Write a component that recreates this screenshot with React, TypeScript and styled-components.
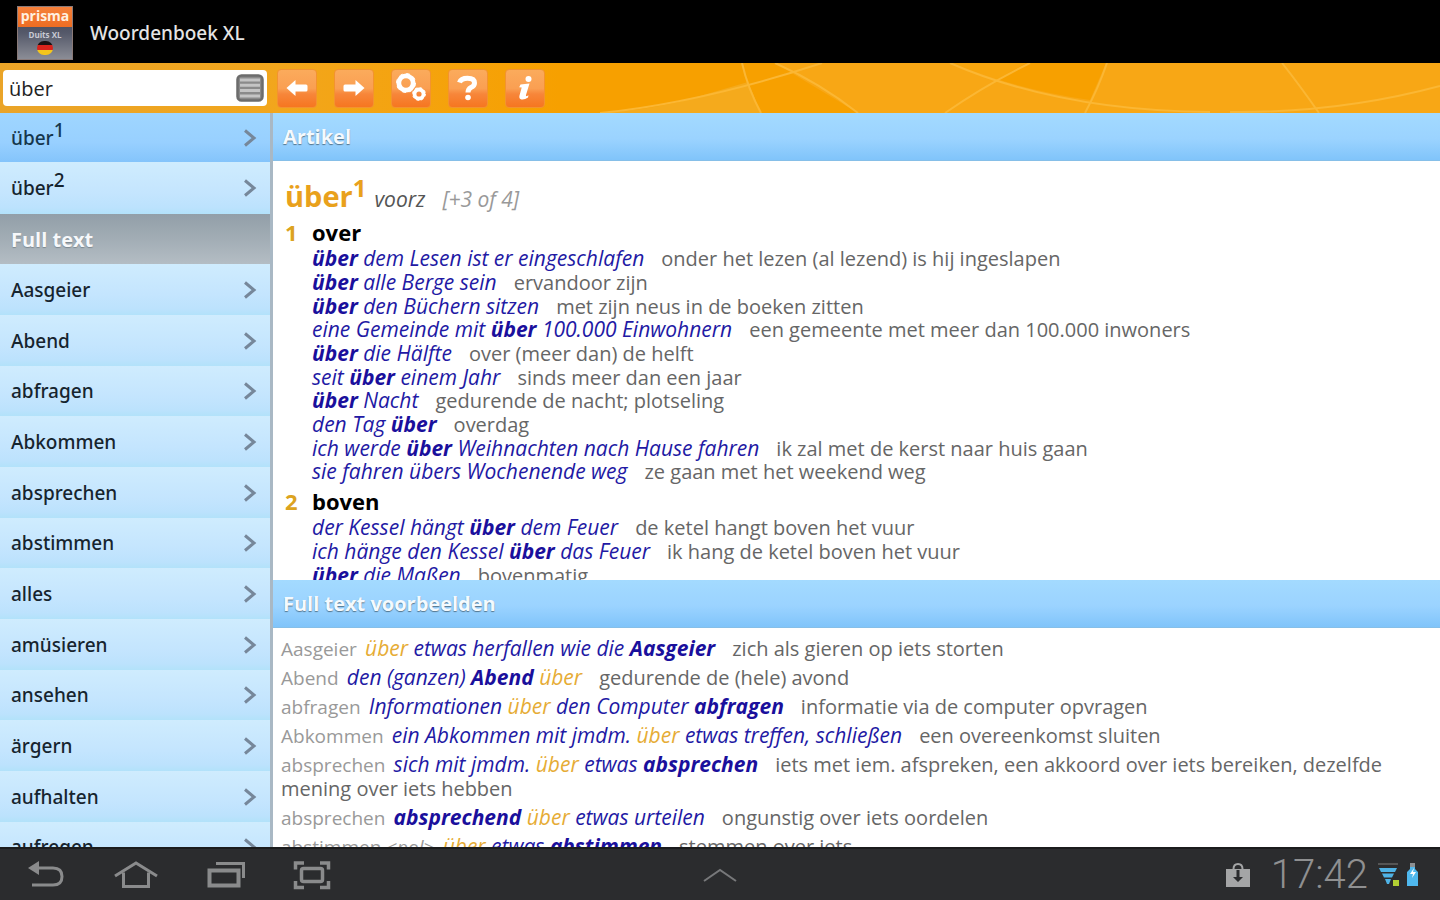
import React from "react";
import styled, { createGlobalStyle } from "styled-components";

const GlobalStyle = createGlobalStyle`
  *, *::before, *::after { box-sizing: border-box; }
  html, body, #root { height: 100%; margin: 0; }
  body {
    background: #000;
    color: #111;
    font-family: "Open Sans", "Noto Sans", sans-serif;
    overflow: hidden;
  }
  button, input { font: inherit; }
`;

const Screen = styled.div`
  display: flex;
  flex-direction: column;
  height: 100vh;
`;

/* ---------- title bar ---------- */

const TitleBar = styled.header`
  display: flex;
  align-items: center;
  flex: none;
  gap: 17px;
  height: 63px;
  padding-left: 17px;
  padding-top: 2px;
  background: #000;
`;

const AppLogo = styled.div`
  display: flex;
  flex-direction: column;
  align-items: center;
  width: 56px;
  height: 54px;
  background: linear-gradient(#3b3f4c, #55596a 50%, #8b8d96);
  border: 1px solid #8a7a78;
`;

const LogoBrand = styled.span`
  width: 100%;
  height: 20px;
  background: linear-gradient(#f5803a, #ee6d22);
  color: #fff0e0;
  font-size: 14px;
  font-weight: 700;
  line-height: 18px;
  text-align: center;
`;

const LogoEdition = styled.span`
  height: 14px;
  color: #c8cad4;
  font-size: 8px;
  font-weight: 700;
  line-height: 15px;
`;

const LogoFlag = styled.span`
  width: 16px;
  height: 14px;
  border-radius: 8px;
  background: linear-gradient(#1a1214 30%, #d8231c 30%, #d8231c 64%, #f4c51c 64%);
`;

const AppTitle = styled.h1`
  margin: 0;
  color: #e4e4e4;
  font-family: "Noto Sans", sans-serif;
  font-size: 19px;
  font-weight: 500;
  line-height: 28px;
`;

/* ---------- search and tool bar ---------- */

const Toolbar = styled.div`
  position: relative;
  display: flex;
  align-items: center;
  flex: none;
  height: 50px;
  padding-left: 3px;
  background: linear-gradient(90deg, #eaa428, #f2a61c 280px, #f7a000 560px, #f7a000);
`;

const ToolbarArt = styled.svg`
  position: absolute;
  top: 0;
  right: 0;
  width: 840px;
  height: 100%;
`;

const SearchBox = styled.label`
  position: relative;
  display: flex;
  align-items: center;
  width: 264px;
  height: 36px;
  padding: 0 3px 0 6px;
  background: #fff;
  border-radius: 4px;
`;

const SearchInput = styled.input`
  flex: 1;
  min-width: 0;
  padding: 0;
  border: 0;
  outline: 0;
  background: transparent;
  color: #222;
  font-size: 20px;
`;

const HistoryButton = styled.button`
  display: flex;
  padding: 0;
  border: 0;
  background: none;
`;

const Tools = styled.nav`
  position: relative;
  display: flex;
  gap: 17px;
  margin-left: 10px;
`;

const ToolButton = styled.button`
  display: flex;
  align-items: center;
  justify-content: center;
  width: 40px;
  height: 39px;
  padding: 0;
  border: 1px solid #f3932f;
  border-radius: 4px;
  background: linear-gradient(#fbab5c, #fa9f52 50%, #f7863a 65%, #f67620);
`;

/* ---------- main area ---------- */

const Main = styled.main`
  display: flex;
  flex: 1;
  min-height: 0;
  background: #fff;
`;

const Sidebar = styled.nav`
  flex: none;
  width: 273px;
  border-right: 3px solid #a9b8c4;
  overflow: hidden;
  background: #c8e8fd;
`;

const WordList = styled.ul`
  display: grid;
  grid-template-rows: 49px 52px 50px;
  grid-auto-rows: 51px 51px 50px;
  margin: 0;
  padding: 0;
  list-style: none;
`;

const WordItem = styled.li`
  display: flex;
`;

const WordButton = styled.button<{ $active?: boolean }>`
  display: flex;
  align-items: center;
  justify-content: space-between;
  width: 100%;
  padding: 0 12px 0 11px;
  border: 0;
  background: ${(p) =>
    p.$active
      ? "linear-gradient(#9fd6ff, #98d0ff 60%, #84c4fb)"
      : "linear-gradient(#cfecfe, #c4e5fe 60%, #bce2fd 88%, #b2e2fa)"};
  color: ${(p) => (p.$active ? "#15364c" : "#16242e")};
  font-family: "Noto Sans", sans-serif;
  font-size: 19px;
  font-weight: 500;
  text-align: left;

  sup {
    font-size: 19px;
    line-height: 0;
    vertical-align: 8px;
  }
`;

const WordGroup = styled.h2`
  display: flex;
  align-items: center;
  width: 100%;
  margin: 0;
  padding: 0 11px;
  background: linear-gradient(#929fa8, #a2adb5 50%, #b4bdc4);
  color: #f6f8fa;
  font-size: 20px;
  font-weight: 700;
  text-shadow: 0 1px 1px #7c8890;
`;

const Content = styled.div`
  display: flex;
  flex: 1;
  flex-direction: column;
  min-width: 0;
`;

const PanelTitle = styled.h2`
  flex: none;
  height: 48px;
  margin: 0;
  padding-left: 10px;
  border-bottom: 1px solid #86bfe8;
  background: linear-gradient(#a3daff, #9bd3ff 55%, #80c4fa);
  color: #f4fafe;
  font-size: 20px;
  font-weight: 700;
  line-height: 48px;
  text-shadow: 0 1px 1px #55768e;
`;

const Article = styled.article`
  flex: 419 1 0;
  min-height: 0;
  overflow: hidden;
  padding: 15px 12px 0;
`;

const Headline = styled.header`
  display: flex;
  align-items: baseline;
  height: 43px;
  color: #777;
  font-size: 21px;
  font-style: italic;
`;

const Headword = styled.h3`
  margin: 0 8px 0 0;
  color: #e9a11c;
  font-size: 29px;
  font-style: normal;
  line-height: 40px;

  sup {
    font-size: 24px;
    line-height: 0;
    vertical-align: 10px;
  }
`;

const WordClass = styled.span`
  margin-right: 17px;
  color: #555;
`;

const Count = styled.span`
  color: #999;
`;

const Sense = styled.section`
  display: grid;
  grid-template-columns: 27px 1fr;
  margin-bottom: 5px;
`;

const SenseNumber = styled.span`
  color: #dca320;
  font-size: 22px;
  font-weight: 700;
  line-height: 27px;
`;

const SenseTitle = styled.h4`
  margin: 0;
  color: #000;
  font-size: 22px;
  line-height: 27px;
`;

const ExampleList = styled.ul`
  display: grid;
  grid-column: 2;
  grid-auto-rows: 24px 24px 23px;
  margin: 0;
  padding: 0;
  list-style: none;
  font-size: 20px;
  line-height: 24px;
  white-space: nowrap;
`;

const Phrase = styled.em`
  margin-right: 17px;
  color: #2219a4;
  font-size: 21px;

  b {
    color: #1a0f9c;
    font-weight: 700;
  }
`;

const Translation = styled.span`
  color: #666;
`;

const Match = styled.span`
  color: #e6ac35;
`;

const Source = styled.span`
  margin-right: 3px;
  color: #999;
  font-size: 19px;
`;

const FullText = styled.section`
  flex: 219 1 0;
  min-height: 0;
  overflow: hidden;
  padding: 8px 8px 0;
`;

const FullTextLine = styled.p`
  margin: 0 0 4px;
  font-size: 20px;
  line-height: 24px;
`;

/* ---------- system bar ---------- */

const SystemBar = styled.footer`
  display: grid;
  grid-template-columns: 1fr auto 1fr;
  align-items: center;
  flex: none;
  height: 53px;
  padding: 0 20px;
  border-top: 2px solid #1b1c1d;
  background: #2b2c2e;
`;

const SystemKeys = styled.div`
  display: flex;
  gap: 47px;
  padding-left: 6px;
`;

const SystemButton = styled.button`
  display: flex;
  padding: 0;
  border: 0;
  background: none;
`;

const Status = styled.div`
  display: flex;
  align-items: center;
  justify-content: flex-end;
`;

const Clock = styled.time`
  margin: 0 10px 0 20px;
  color: #8f9091;
  font-family: Roboto, sans-serif;
  font-size: 40px;
  font-weight: 300;
  line-height: 50px;
`;

const Chevron = () => (
  <svg width="16" height="20" viewBox="0 0 16 20" fill="none" stroke="#76879a" strokeWidth="3">
    <path d="M3 2.500l9 7.500-9 7.500" />
  </svg>
);

type Example = { de: React.ReactNode; nl: string };

const overExamples: Example[] = [
  { de: <><b>über</b> dem Lesen ist er eingeschlafen</>, nl: "onder het lezen (al lezend) is hij ingeslapen" },
  { de: <><b>über</b> alle Berge sein</>, nl: "ervandoor zijn" },
  { de: <><b>über</b> den Büchern sitzen</>, nl: "met zijn neus in de boeken zitten" },
  { de: <>eine Gemeinde mit <b>über</b> 100.000 Einwohnern</>, nl: "een gemeente met meer dan 100.000 inwoners" },
  { de: <><b>über</b> die Hälfte</>, nl: "over (meer dan) de helft" },
  { de: <>seit <b>über</b> einem Jahr</>, nl: "sinds meer dan een jaar" },
  { de: <><b>über</b> Nacht</>, nl: "gedurende de nacht; plotseling" },
  { de: <>den Tag <b>über</b></>, nl: "overdag" },
  { de: <>ich werde <b>über</b> Weihnachten nach Hause fahren</>, nl: "ik zal met de kerst naar huis gaan" },
  { de: <>sie fahren übers Wochenende weg</>, nl: "ze gaan met het weekend weg" },
];

const bovenExamples: Example[] = [
  { de: <>der Kessel hängt <b>über</b> dem Feuer</>, nl: "de ketel hangt boven het vuur" },
  { de: <>ich hänge den Kessel <b>über</b> das Feuer</>, nl: "ik hang de ketel boven het vuur" },
  { de: <><b>über</b> die Maßen</>, nl: "bovenmatig" },
];

const fullText: (Example & { source: React.ReactNode })[] = [
  { source: "Aasgeier", de: <><Match>über</Match> etwas herfallen wie die <b>Aasgeier</b></>, nl: "zich als gieren op iets storten" },
  { source: "Abend", de: <>den (ganzen) <b>Abend</b> <Match>über</Match></>, nl: "gedurende de (hele) avond" },
  { source: "abfragen", de: <>Informationen <Match>über</Match> den Computer <b>abfragen</b></>, nl: "informatie via de computer opvragen" },
  { source: "Abkommen", de: <>ein Abkommen mit jmdm. <Match>über</Match> etwas treffen, schließen</>, nl: "een overeenkomst sluiten" },
  { source: "absprechen", de: <>sich mit jmdm. <Match>über</Match> etwas <b>absprechen</b></>, nl: "iets met iem. afspreken, een akkoord over iets bereiken, dezelfde mening over iets hebben" },
  { source: "absprechen", de: <><b>absprechend</b> <Match>über</Match> etwas urteilen</>, nl: "ongunstig over iets oordelen" },
  { source: <>abstimmen <i>&lt;pol&gt;</i></>, de: <><Match>über</Match> etwas <b>abstimmen</b></>, nl: "stemmen over iets" },
];

const words = [
  "Aasgeier", "Abend", "abfragen", "Abkommen", "absprechen", "abstimmen",
  "alles", "amüsieren", "ansehen", "ärgern", "aufhalten", "aufregen",
];

const SenseBlock = ({ n, title, examples }: { n: number; title: string; examples: Example[] }) => (
  <Sense>
    <SenseNumber>{n}</SenseNumber>
    <SenseTitle>{title}</SenseTitle>
    <ExampleList>
      {examples.map((e) => (
        <li key={e.nl}>
          <Phrase>{e.de}</Phrase>
          <Translation>{e.nl}</Translation>
        </li>
      ))}
    </ExampleList>
  </Sense>
);

export default function App() {
  return (
    <Screen>
      <GlobalStyle />
      <TitleBar>
        <AppLogo>
          <LogoBrand>prisma</LogoBrand>
          <LogoEdition>Duits XL</LogoEdition>
          <LogoFlag />
        </AppLogo>
        <AppTitle>Woordenboek XL</AppTitle>
      </TitleBar>

      <Toolbar>
        <ToolbarArt viewBox="600 0 840 50" preserveAspectRatio="none" aria-hidden="true">
          <path d="M818 0H775L858 50H1440V0z" fill="#f8a715" />
          <path d="M600 50Q660 46 700 33L748 19L761 50z" fill="#f5aa1c" />
          <path d="M742 0H775L790 9L748 21z" fill="#f7a000" />
          <path d="M1026 0L997 16Q1040 30 1090 37L1106 0z" fill="#f7a000" />
          <path d="M950 0L1026 0L997 16z" fill="#f8a60e" />
          <g fill="none" stroke="#fbb734" strokeWidth="2">
            <path d="M742 0Q748 26 761 50" />
            <path d="M600 50Q700 40 822 0" />
            <path d="M775 0Q820 20 858 50" />
            <path d="M1030 0Q985 22 945 50" />
            <path d="M950 0Q1060 48 1210 49" />
            <path d="M1107 0Q1098 26 1085 50" />
            <path d="M1282 0Q1298 20 1319 50" />
            <path d="M1230 49Q1340 50 1440 23" />
          </g>
        </ToolbarArt>
        <SearchBox>
          <SearchInput type="text" aria-label="Zoeken" defaultValue="über" />
          <HistoryButton type="button" aria-label="Lijst">
            <svg width="28" height="28" viewBox="0 0 28 28">
              <rect x="1.500" y="1.500" width="25" height="25" rx="4" fill="#8a8a8a" stroke="#6c6c6c" strokeWidth="2.500" />
              <path d="M4 6h20M4 11.300h20M4 16.600h20M4 22h20" stroke="#c4c4c4" strokeWidth="3" />
            </svg>
          </HistoryButton>
        </SearchBox>
        <Tools>
          <ToolButton type="button" aria-label="Vorige">
            <svg width="24" height="20" viewBox="0 0 24 20" fill="#fff">
              <path d="M1.500 10L10.500 2v4.500H21q1.500 0 1.500 1.500v4q0 1.500-1.500 1.500H10.500V18z" />
            </svg>
          </ToolButton>
          <ToolButton type="button" aria-label="Volgende">
            <svg width="24" height="20" viewBox="0 0 24 20" fill="#fff">
              <path d="M22.500 10L13.500 2v4.500H3Q1.500 6.500 1.500 8v4q0 1.500 1.500 1.500H13.500V18z" />
            </svg>
          </ToolButton>
          <ToolButton type="button" aria-label="Instellingen">
            <svg width="34" height="34" viewBox="0 0 34 34" fill="none" stroke="#fff">
              <circle cx="12" cy="12" r="7.200" strokeWidth="4.800" />
              <circle cx="12" cy="12" r="9.500" strokeWidth="1" strokeDasharray="3.700 3.760" />
              <circle cx="25" cy="23" r="4.500" strokeWidth="3.800" />
              <circle cx="25" cy="23" r="6.400" strokeWidth="1" strokeDasharray="2.500 2.520" />
            </svg>
          </ToolButton>
          <ToolButton type="button" aria-label="Help">
            <svg width="24" height="28" viewBox="0 0 24 28" fill="none" stroke="#fff" strokeWidth="5">
              <path d="M3.500 8.500Q5 4.200 11.500 4.200Q18.500 4.200 18.500 9Q18.500 12 15 13.500Q12 15 12 18.500" />
              <circle cx="12" cy="23.500" r="2.800" fill="#fff" stroke="none" />
            </svg>
          </ToolButton>
          <ToolButton type="button" aria-label="Info">
            <svg width="20" height="28" viewBox="0 0 20 28" fill="#fff">
              <circle cx="13.500" cy="5" r="3" />
              <path d="M5.500 10.500l9-1-3.500 11.500q-.3 1.500 1 1l1.500-.8-.5 2.300Q9.500 26 6.500 25.500q-2.800-.7-2-4l2.200-8-2.500-.3z" />
            </svg>
          </ToolButton>
        </Tools>
      </Toolbar>

      <Main>
        <Sidebar aria-label="Trefwoorden">
          <WordList>
            <WordItem>
              <WordButton $active type="button">
                <span>über<sup>1</sup></span>
                <Chevron />
              </WordButton>
            </WordItem>
            <WordItem>
              <WordButton type="button">
                <span>über<sup>2</sup></span>
                <Chevron />
              </WordButton>
            </WordItem>
            <WordItem>
              <WordGroup>Full text</WordGroup>
            </WordItem>
            {words.map((w) => (
              <WordItem key={w}>
                <WordButton type="button">
                  {w}
                  <Chevron />
                </WordButton>
              </WordItem>
            ))}
          </WordList>
        </Sidebar>

        <Content>
          <PanelTitle>Artikel</PanelTitle>
          <Article>
            <Headline>
              <Headword>über<sup>1</sup></Headword>
              <WordClass>voorz</WordClass>
              <Count>[+3 of 4]</Count>
            </Headline>
            <SenseBlock n={1} title="over" examples={overExamples} />
            <SenseBlock n={2} title="boven" examples={bovenExamples} />
          </Article>
          <PanelTitle>Full text voorbeelden</PanelTitle>
          <FullText>
            {fullText.map((e) => (
              <FullTextLine key={e.nl}>
                <Source>{e.source}</Source> <Phrase>{e.de}</Phrase>
                <Translation>{e.nl}</Translation>
              </FullTextLine>
            ))}
          </FullText>
        </Content>
      </Main>

      <SystemBar>
        <SystemKeys>
          <SystemButton type="button" aria-label="Terug">
            <svg width="40" height="32" viewBox="0 0 40 32" fill="none" stroke="#8a8b8c" strokeWidth="3">
              <path d="M10 9H27Q36 9 36 17.500T27 26H6" />
              <path d="M2 9l11-7v14z" fill="#8a8b8c" stroke="none" />
            </svg>
          </SystemButton>
          <SystemButton type="button" aria-label="Startscherm">
            <svg width="46" height="32" viewBox="0 0 46 32" fill="none" stroke="#8a8b8c" strokeWidth="3">
              <path d="M2 17L23 4l21 13" />
              <path d="M10.500 13.500V27.500h25V13.500" />
            </svg>
          </SystemButton>
          <SystemButton type="button" aria-label="Recente apps">
            <svg width="40" height="32" viewBox="0 0 40 32" fill="none" stroke="#8a8b8c" strokeWidth="3">
              <path d="M3.500 11.500h29v15h-29z" strokeWidth="4" />
              <path d="M10 4.500H37.500V19" />
            </svg>
          </SystemButton>
          <SystemButton type="button" aria-label="Schermafbeelding">
            <svg width="38" height="32" viewBox="0 0 38 32" fill="none" stroke="#8a8b8c" strokeWidth="3.500">
              <rect x="8.500" y="9.500" width="21" height="13" rx="2" />
              <path d="M2.500 10.500V4H11M27 4h8.500V10.500M35.500 22v6.500H27M11 28.500H2.500V22" />
            </svg>
          </SystemButton>
        </SystemKeys>
        <SystemButton type="button" aria-label="Menu openen">
          <svg width="36" height="18" viewBox="0 0 36 18" fill="none" stroke="#77787a" strokeWidth="2">
            <path d="M2 15L18 4l16 11" />
          </svg>
        </SystemButton>
        <Status>
          <svg width="26" height="26" viewBox="0 0 26 26">
            <path d="M1 7h24v18H1z" fill="#a4a5a6" />
            <path d="M8.500 7q0-5 4.500-5t4.500 5" fill="none" stroke="#a4a5a6" strokeWidth="2" />
            <path d="M11.500 8h3v7h3.500l-5 5-5-5h3.500z" fill="#2b2c2e" />
          </svg>
          <Clock>17:42</Clock>
          <svg width="42" height="28" viewBox="0 0 42 28">
            <path d="M0 3h20" stroke="#555" strokeWidth="2" />
            <path d="M1 7h18l-2 4H3zM4 12.500h12l-2 4H6zM7 18h6l-2 5H9z" fill="#4fb3e6" />
            <path d="M15 19h6v6h-6z" fill="#b2cf33" />
            <path d="M32 5h5v3l3 3v14H29V11l3-3z" fill="#4fb8ee" />
            <path d="M32 2h5v4h-5z" fill="#8b8f92" />
            <path d="M36 7l-4 6h3l-1 4 4-6h-3z" fill="#fff" />
          </svg>
        </Status>
      </SystemBar>
    </Screen>
  );
}
